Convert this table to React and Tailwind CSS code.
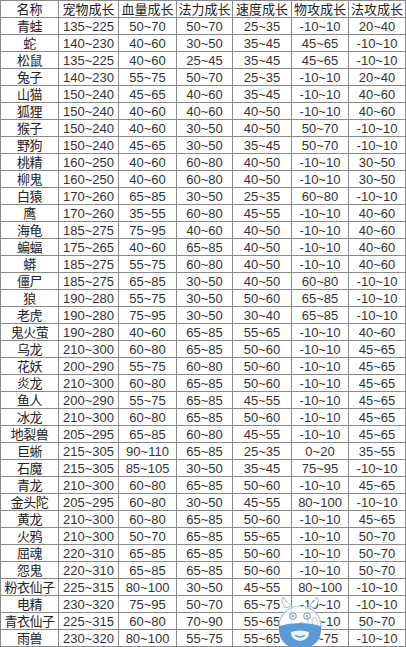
const headers = ["名称", "宠物成长", "血量成长", "法力成长", "速度成长", "物攻成长", "法攻成长"]

const rows = [
  ["青蛙", "135~225", "50~70", "50~70", "25~35", "-10~10", "20~40"],
  ["蛇", "140~230", "40~60", "30~50", "35~45", "45~65", "-10~10"],
  ["松鼠", "135~225", "40~60", "25~45", "35~45", "45~65", "-10~10"],
  ["兔子", "140~230", "55~75", "50~70", "25~35", "-10~10", "20~40"],
  ["山猫", "150~240", "45~65", "40~60", "35~45", "-10~10", "40~60"],
  ["狐狸", "150~240", "40~60", "40~60", "40~50", "-10~10", "40~60"],
  ["猴子", "150~240", "40~60", "30~50", "40~50", "50~70", "-10~10"],
  ["野狗", "150~240", "45~65", "30~50", "35~45", "50~70", "-10~10"],
  ["桃精", "160~250", "40~60", "60~80", "40~50", "-10~10", "30~50"],
  ["柳鬼", "160~250", "40~60", "60~80", "40~50", "-10~10", "30~50"],
  ["白猿", "170~260", "65~85", "30~50", "25~35", "60~80", "-10~10"],
  ["鹰", "170~260", "35~55", "60~80", "45~55", "-10~10", "40~60"],
  ["海龟", "185~275", "75~95", "40~60", "40~50", "-10~10", "40~60"],
  ["蝙蝠", "175~265", "40~60", "65~85", "40~50", "-10~10", "40~60"],
  ["蟒", "185~275", "55~75", "60~80", "40~50", "-10~10", "40~60"],
  ["僵尸", "185~275", "65~85", "30~50", "40~50", "60~80", "-10~10"],
  ["狼", "190~280", "55~75", "30~50", "50~60", "65~85", "-10~10"],
  ["老虎", "190~280", "75~95", "30~50", "30~40", "65~85", "-10~10"],
  ["鬼火萤", "190~280", "40~60", "65~85", "55~65", "-10~10", "40~60"],
  ["乌龙", "210~300", "60~80", "65~85", "50~60", "-10~10", "45~65"],
  ["花妖", "200~290", "55~75", "60~80", "50~60", "-10~10", "45~65"],
  ["炎龙", "210~300", "60~80", "65~85", "50~60", "-10~10", "45~65"],
  ["鱼人", "200~290", "55~75", "65~85", "45~55", "-10~10", "45~65"],
  ["冰龙", "210~300", "60~80", "65~85", "50~60", "-10~10", "45~65"],
  ["地裂兽", "205~295", "65~85", "60~80", "45~55", "-10~10", "45~65"],
  ["巨蜥", "215~305", "90~110", "65~85", "25~35", "0~20", "35~55"],
  ["石魔", "215~305", "85~105", "30~50", "35~45", "75~95", "-10~10"],
  ["青龙", "210~300", "60~80", "65~85", "50~60", "-10~10", "45~65"],
  ["金头陀", "205~295", "60~80", "30~50", "45~55", "80~100", "-10~10"],
  ["黄龙", "210~300", "60~80", "65~85", "50~60", "-10~10", "45~65"],
  ["火鸦", "210~300", "50~70", "65~85", "55~65", "-10~10", "50~70"],
  ["屈魂", "220~310", "65~85", "65~85", "50~60", "-10~10", "50~70"],
  ["怨鬼", "220~310", "65~85", "65~85", "50~60", "-10~10", "50~70"],
  ["粉衣仙子", "225~315", "80~100", "30~50", "45~55", "80~100", "-10~10"],
  ["电精", "230~320", "75~95", "50~70", "65~75", "-10~10", "-10~10"],
  ["青衣仙子", "225~315", "60~80", "70~90", "55~65", "-10~10", "50~70"],
  ["雨兽", "230~320", "80~100", "55~75", "55~65", "60~75", "-10~10"],
]

// watermark cow head, bottom right
function Watermark() {
  return (
    <svg
      width="48"
      height="52"
      viewBox="0 0 48 52"
      className="absolute left-[276px] top-[596px] pointer-events-none"
    >
      <path d="M9 12 Q4 4 7 1 Q11 7 16 10 Z" fill="#fff" stroke="#9bbad8" strokeWidth="1" />
      <path d="M39 12 Q44 4 41 1 Q37 7 32 10 Z" fill="#fff" stroke="#9bbad8" strokeWidth="1" />
      <ellipse cx="24" cy="30" rx="21" ry="20" fill="#ffffff" fillOpacity="0.75" stroke="#a9bfd6" strokeWidth="1.2" />
      <circle cx="17" cy="20" r="3.2" fill="none" stroke="#8fa9c4" strokeWidth="1.2" />
      <circle cx="31" cy="20" r="3.2" fill="none" stroke="#8fa9c4" strokeWidth="1.2" />
      <circle cx="17" cy="20" r="1.2" fill="#8fa9c4" />
      <circle cx="31" cy="20" r="1.2" fill="#8fa9c4" />
      <path d="M3 30 Q24 24 45 30 L45 34 Q44 52 24 52 Q4 52 3 34 Z" fill="#5a9ad6" />
      <path d="M15 36 Q24 33 33 36 Q33 44 24 45 Q15 44 15 36 Z" fill="#ffffff" fillOpacity="0.9" />
      <path d="M19 39 Q24 43 29 39" stroke="#5a9ad6" strokeWidth="1.4" fill="none" />
    </svg>
  )
}

export default function App() {
  return (
    <div className="relative w-[406px] h-[647px] overflow-hidden bg-white font-['Liberation_Sans','Noto_Sans_CJK_SC',sans-serif]">
      <table className="border-collapse table-fixed w-[405px] text-[13px] text-[#333]">
        <colgroup>
          <col className="w-[58px]" />
          <col className="w-[60px]" />
          <col className="w-[58px]" />
          <col className="w-[56px]" />
          <col className="w-[59px]" />
          <col className="w-[57px]" />
          <col className="w-[57px]" />
        </colgroup>
        <thead>
          <tr className="h-[17px]">
            {headers.map(h => (
              <th key={h} className="border border-[#8a8a8a] p-0 font-normal leading-[15px] text-center text-[#222] whitespace-nowrap">
                {h}
              </th>
            ))}
          </tr>
        </thead>
        <tbody>
          {rows.map(row => (
            <tr key={row[0]} className="h-[17px]">
              {row.map((cell, i) => (
                <td
                  key={i}
                  className={
                    "border border-[#8a8a8a] p-0 leading-[15px] text-center whitespace-nowrap " +
                    (i === 0 ? "text-[#222] tracking-[-0.5px]" : "")
                  }
                >
                  {cell}
                </td>
              ))}
            </tr>
          ))}
        </tbody>
      </table>
      <Watermark />
    </div>
  )
}
